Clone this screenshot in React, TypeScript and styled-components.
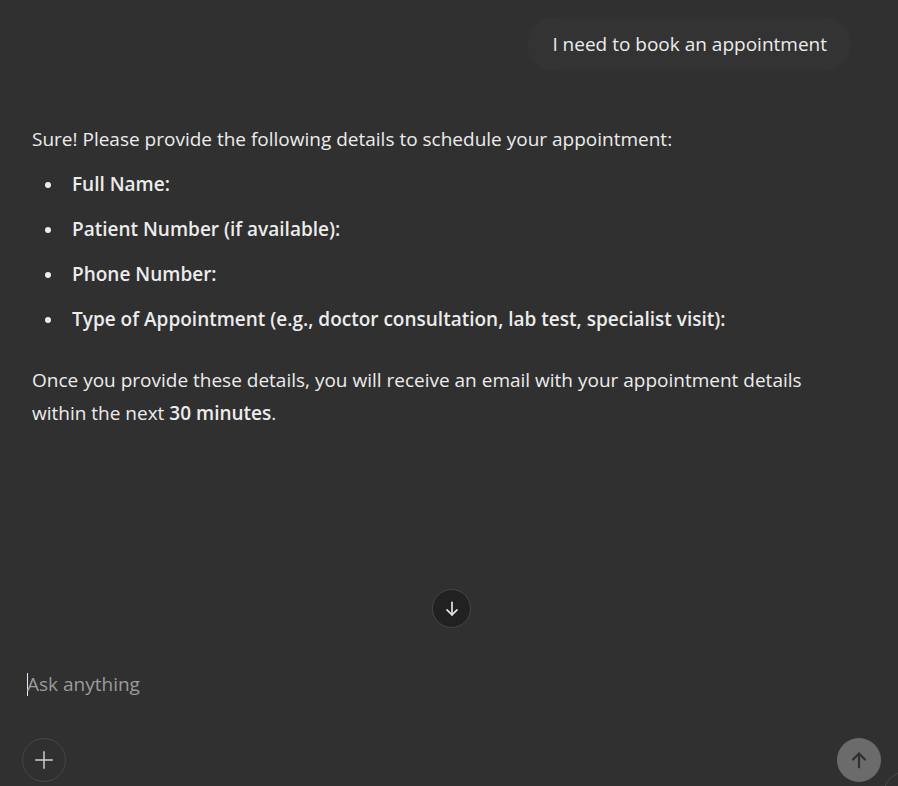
import React from "react";
import styled, { createGlobalStyle } from "styled-components";

const Global = createGlobalStyle`
  html, body { margin: 0; padding: 0; background: #303030; }
  body { font-family: "Open Sans", "Noto Sans", sans-serif; color: #ececec; overflow: hidden; }
  * { box-sizing: border-box; }
`;

const Page = styled.div`
  height: 786px;
  width: 898px;
  display: flex;
  flex-direction: column;
  position: relative;
  background: #303030;
`;

const Thread = styled.div`
  flex: 1;
  position: relative;
  display: flex;
  flex-direction: column;
  padding: 17px 47px 0 32px;
`;

const UserRow = styled.div`
  display: flex;
  justify-content: flex-end;
`;

const Bubble = styled.div`
  background: #333333;
  border-radius: 27px;
  height: 54px;
  padding: 0 24px 0 25px;
  display: flex;
  align-items: center;
  font-size: 19px;
  color: #ececec;
`;

const Answer = styled.div`
  margin-top: 52px;
  font-size: 19px;
  line-height: 33px;
  color: #ececec;
`;

const Para = styled.p`
  margin: 0;
`;

const List = styled.ul`
  list-style: none;
  margin: 12px 0 0;
  padding: 0 0 0 13px;
  display: flex;
  flex-direction: column;
  gap: 12px;
`;

const Item = styled.li`
  display: flex;
  align-items: center;
  gap: 21px;
  font-weight: 600;
  &::before {
    content: "";
    width: 6px;
    height: 6px;
    border-radius: 50%;
    background: #ececec;
    flex: none;
  }
`;

const Closing = styled.p`
  margin: 28px 0 0;
`;

const Strong = styled.strong`
  font-weight: 600;
`;

const ScrollDown = styled.button`
  position: absolute;
  left: 432px;
  top: 589px;
  width: 39px;
  height: 39px;
  border-radius: 50%;
  background: #212121;
  border: 1px solid #464646;
  display: flex;
  align-items: center;
  justify-content: center;
  padding: 0;
`;

const Composer = styled.div`
  display: flex;
  flex-direction: column;
  padding: 0 17px 4px 22px;
`;

const InputLine = styled.div`
  display: flex;
  align-items: center;
  padding-left: 5px;
  height: 26px;
  margin-top: 1px;
  margin-bottom: 41px;
  font-size: 19px;
  color: #9b9b9b;
`;

const Caret = styled.span`
  width: 1px;
  height: 23px;
  background: #e8e8e8;
  margin-right: -1px;
`;

const Actions = styled.div`
  display: flex;
  justify-content: space-between;
  align-items: center;
`;

const RoundButton = styled.button<{ $filled?: boolean }>`
  width: 44px;
  height: 44px;
  border-radius: 50%;
  padding: 0;
  display: flex;
  align-items: center;
  justify-content: center;
  background: ${(p) => (p.$filled ? "#6b6b6b" : "transparent")};
  border: ${(p) => (p.$filled ? "none" : "1px solid #474747")};
`;

const CornerRing = styled.div`
  position: absolute;
  right: -26px;
  bottom: -26px;
  width: 40px;
  height: 40px;
  border-radius: 50%;
  border: 1px solid #4a4a4a;
`;

const items = [
  "Full Name:",
  "Patient Number (if available):",
  "Phone Number:",
  "Type of Appointment (e.g., doctor consultation, lab test, specialist visit):",
];

export default function App() {
  return (
    <>
      <Global />
      <Page>
        <Thread>
          <UserRow>
            <Bubble>I need to book an appointment</Bubble>
          </UserRow>
          <Answer>
            <Para>Sure! Please provide the following details to schedule your appointment:</Para>
            <List>
              {items.map((t) => (
                <Item key={t}>{t}</Item>
              ))}
            </List>
            <Closing>
              Once you provide these details, you will receive an email with your appointment details
              within the next <Strong>30 minutes</Strong>.
            </Closing>
          </Answer>
          <ScrollDown aria-label="Scroll down">
            <svg width="20" height="20" viewBox="0 0 24 24" fill="none" stroke="#e6e6e6" strokeWidth="2" strokeLinecap="round" strokeLinejoin="round">
              <path d="M12 4v15" />
              <path d="M6 13l6 6 6-6" />
            </svg>
          </ScrollDown>
        </Thread>
        <Composer>
          <InputLine>
            <Caret />
            Ask anything
          </InputLine>
          <Actions>
            <RoundButton aria-label="Add">
              <svg width="22" height="22" viewBox="0 0 24 24" fill="none" stroke="#cfcfcf" strokeWidth="1.6" strokeLinecap="round">
                <path d="M12 3v18" />
                <path d="M3 12h18" />
              </svg>
            </RoundButton>
            <RoundButton $filled aria-label="Send">
              <svg width="22" height="22" viewBox="0 0 24 24" fill="none" stroke="#303030" strokeWidth="2.4" strokeLinecap="round" strokeLinejoin="round">
                <path d="M12 20V5" />
                <path d="M5.5 11.5L12 5l6.5 6.5" />
              </svg>
            </RoundButton>
          </Actions>
        </Composer>
        <CornerRing />
      </Page>
    </>
  );
}
